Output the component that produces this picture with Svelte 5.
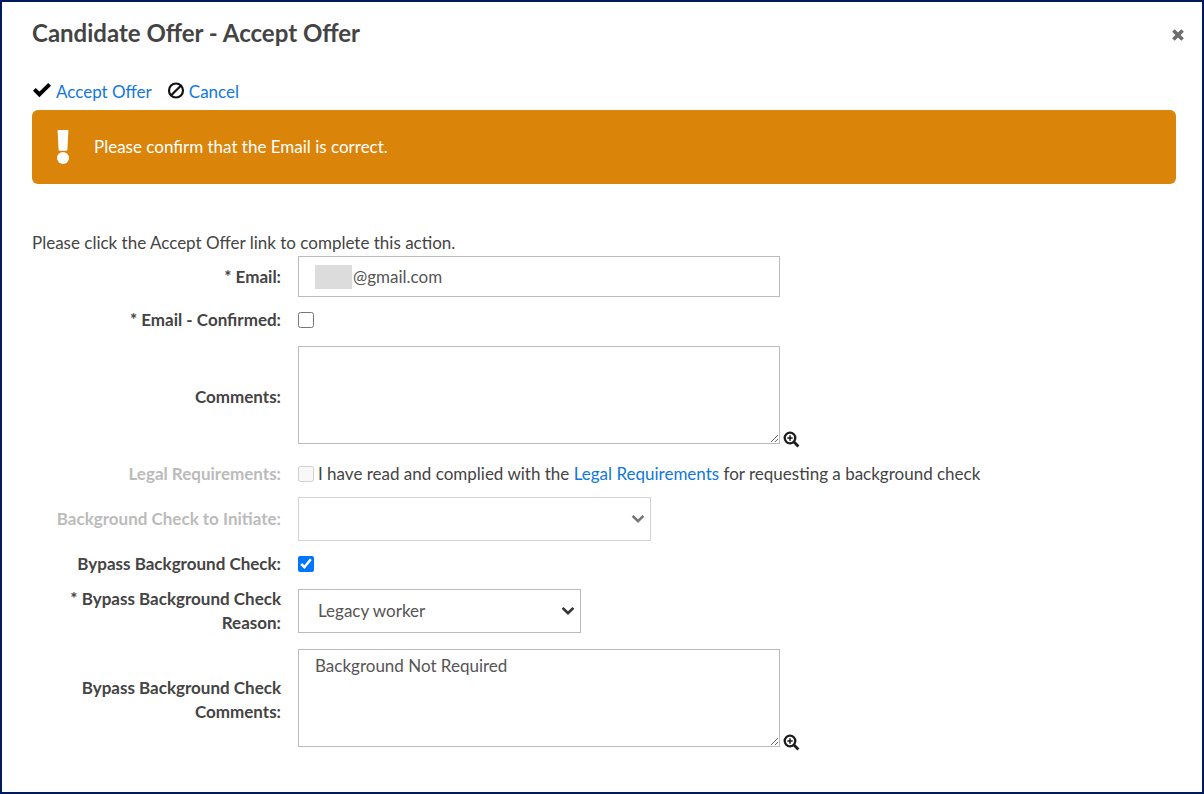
<script>
	let email = '@gmail.com';
	let emailConfirmed = false;
	let comments = '';
	let legalAccepted = false;
	let bypass = true;
	let reason = 'Legacy worker';
	let bypassComments = 'Background Not Required';
	let initiate = '';
</script>

{#snippet zoomIcon()}
	<svg width="17" height="17" viewBox="0 0 17 17" fill="none" stroke="#1b1b1b">
		<circle cx="7" cy="7" r="5.3" stroke-width="2.3" />
		<path d="M4.3 7h5.4M7 4.3v5.4" stroke-width="1.5" />
		<path d="M10.8 10.8l4.6 4.6" stroke-width="2.8" />
	</svg>
{/snippet}

<main class="dialog">
	<header>
		<h1>Candidate Offer - Accept Offer</h1>
		<button class="close" type="button" aria-label="Close">
			<svg width="12" height="12" viewBox="0 0 12 12" stroke="#6d6d6d" stroke-width="3.6">
				<path d="M1.4 1.4l9.2 9.2M10.6 1.4l-9.2 9.2" />
			</svg>
		</button>
	</header>

	<nav class="actions">
		<svg width="20" height="20" viewBox="0 0 20 20" fill="none" stroke="#000" stroke-width="4">
			<path d="M2.4 7.4l5 5L17.6 2.4" stroke-linejoin="miter" />
		</svg>
		<a href="#accept">Accept Offer</a>
		<svg class="ban" width="18" height="20" viewBox="0 0 18 20" fill="none" stroke="#111" stroke-width="2.2">
			<circle cx="9" cy="8.5" r="7" />
			<path d="M4.2 13.3l9.6-9.6" />
		</svg>
		<a href="#cancel">Cancel</a>
	</nav>

	<div class="alert" role="alert">
		<svg width="14" height="36" viewBox="0 0 14 36" fill="#fff">
			<path d="M2.4 1h9.2q.8 0 .8.8l-1 19q0 1-1 1H3.6q-1 0-1-1l-1-19q0-.8.8-.8z" />
			<circle cx="7" cy="29" r="6" />
		</svg>
		<span>Please confirm that the Email is correct.</span>
	</div>

	<p>Please click the Accept Offer link to complete this action.</p>

	<form>
		<label for="email">* Email:</label>
		<div class="field masked">
			<input id="email" class="box" type="text" bind:value={email} />
			<span class="mask"></span>
		</div>

		<label for="confirmed">* Email - Confirmed:</label>
		<div class="field">
			<input id="confirmed" type="checkbox" bind:checked={emailConfirmed} />
		</div>

		<label for="comments">Comments:</label>
		<div class="field area">
			<textarea id="comments" class="box" bind:value={comments}></textarea>
			<button class="zoom" type="button" aria-label="Expand comments">{@render zoomIcon()}</button>
		</div>

		<label for="legal" class="off">Legal Requirements:</label>
		<div class="field legal">
			<input id="legal" type="checkbox" bind:checked={legalAccepted} disabled />
			<span>I have read and complied with the <a href="#legal">Legal Requirements</a> for requesting a background check</span>
		</div>

		<label for="initiate" class="off">Background Check to Initiate:</label>
		<div class="field pick wide off">
			<select id="initiate" bind:value={initiate} disabled>
				<option value=""></option>
			</select>
			<svg class="arrow" width="14" height="10" viewBox="0 0 14 10" fill="none" stroke="#757575" stroke-width="2.6"><path d="M1.6 1.8L7 7.2l5.4-5.4" /></svg>
		</div>

		<label for="bypass">Bypass Background Check:</label>
		<div class="field">
			<input id="bypass" type="checkbox" bind:checked={bypass} />
		</div>

		<label for="reason">* Bypass Background Check Reason:</label>
		<div class="field pick">
			<select id="reason" bind:value={reason}>
				<option>Legacy worker</option>
			</select>
			<svg class="arrow" width="14" height="10" viewBox="0 0 14 10" fill="none" stroke="#333" stroke-width="2.6"><path d="M1.6 1.8L7 7.2l5.4-5.4" /></svg>
		</div>

		<label for="bypassComments">Bypass Background Check Comments:</label>
		<div class="field area">
			<textarea id="bypassComments" class="box" bind:value={bypassComments}></textarea>
			<button class="zoom" type="button" aria-label="Expand bypass comments">{@render zoomIcon()}</button>
		</div>
	</form>
</main>

<style>
	:global(body) {
		background: #fff;
	}

	.dialog {
		box-sizing: border-box;
		min-height: 100vh;
		padding: 15px 26px 16px 30px;
		border: 2px solid #001a5e;
		font-family: Lato, "Liberation Sans", sans-serif;
		font-size: 17px;
		line-height: 24px;
		color: #444;
	}

	header {
		display: flex;
		justify-content: space-between;
		align-items: center;
		margin-right: -8px;
	}

	h1 {
		margin: 0;
		font-size: 24px;
		line-height: 32px;
		font-weight: 700;
	}

	button {
		display: block;
		padding: 0;
		border: none;
		background: none;
		cursor: pointer;
	}

	.close {
		padding-top: 3px;
	}

	svg {
		display: block;
		flex: none;
	}

	a {
		color: #1177dd;
		text-decoration: none;
	}

	.actions {
		display: flex;
		align-items: center;
		gap: 4px;
		margin-top: 31px;
	}

	.ban {
		margin-left: 11px;
	}

	.alert {
		display: flex;
		align-items: center;
		gap: 24px;
		height: 74px;
		margin-top: 6px;
		padding: 0 24px;
		border-radius: 6px;
		background: #da840a;
		color: #fff;
	}

	p {
		margin: 47px 0 1px;
	}

	form {
		display: grid;
		grid-template-columns: 249px 1fr;
		gap: 11px 17px;
		align-items: center;
	}

	label {
		padding-left: 24px;
		font-weight: 700;
		text-align: right;
	}

	label.off {
		color: #bbb;
	}

	.field {
		display: flex;
		align-items: center;
	}

	.box {
		box-sizing: border-box;
		width: 482px;
		height: 41px;
		padding: 4px 16px;
		border: 1px solid #bbb;
		background: #fff;
		font: inherit;
		color: #555;
	}

	textarea.box {
		height: 98px;
	}

	.masked {
		position: relative;
	}

	.masked .box {
		padding-left: 54px;
	}

	.mask {
		position: absolute;
		left: 17px;
		top: 9px;
		width: 37px;
		height: 24px;
		background: #dcdcdc;
	}

	input[type="checkbox"] {
		width: 16px;
		height: 16px;
		margin: 0;
	}

	.area {
		align-items: flex-end;
		gap: 3px;
		padding: 3px 0 7px;
	}

	.zoom {
		margin-bottom: -4px;
	}

	.legal {
		gap: 4px;
	}

	.pick {
		position: relative;
		width: 283px;
	}

	.pick.wide {
		width: 353px;
	}

	select {
		appearance: none;
		box-sizing: border-box;
		width: 100%;
		height: 44px;
		padding: 0 19px;
		border: 1px solid #bbb;
		border-radius: 0;
		background: #fff;
		font: inherit;
		color: #555;
		opacity: 1;
	}

	.off select {
		border-color: #d4d4d4;
	}

	.arrow {
		position: absolute;
		right: 6px;
		top: 17px;
		pointer-events: none;
	}
</style>
